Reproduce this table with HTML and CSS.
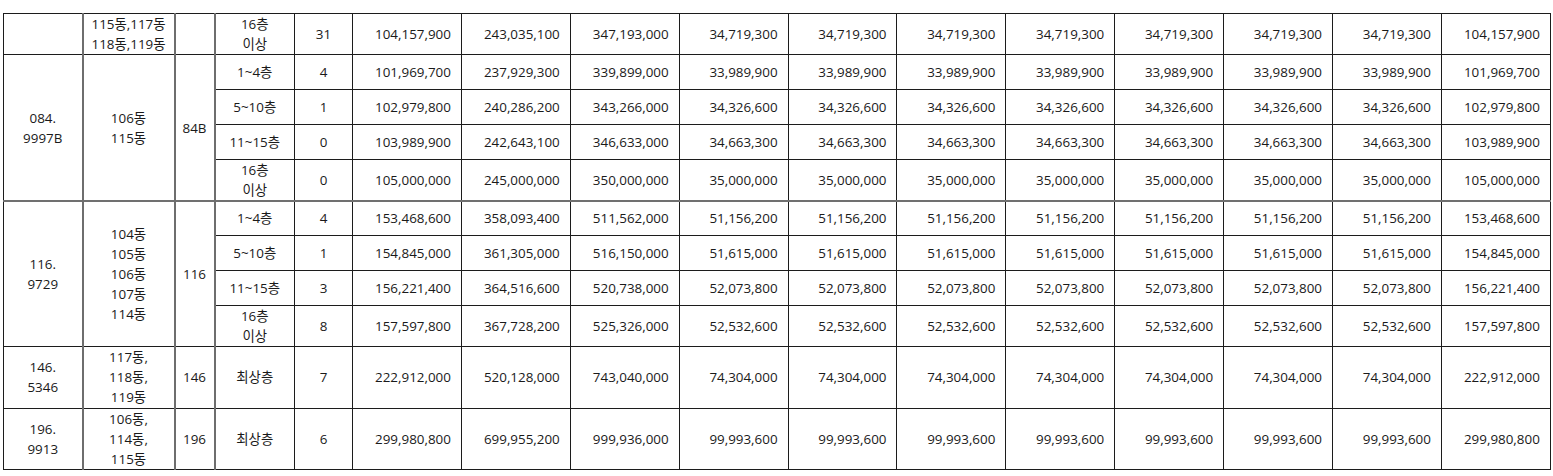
FILE: index.html
```html
<!DOCTYPE html>
<html lang="ko">
<head>
<meta charset="utf-8">
<title>분양가 표</title>
<link rel="stylesheet" href="styles.css">
</head>
<body>
<table class="price">
<colgroup>
<col class="c-type"><col class="c-dong"><col class="c-area"><col class="c-floor"><col class="c-cnt">
<col class="c-num"><col class="c-num"><col class="c-num"><col class="c-num"><col class="c-num"><col class="c-num"><col class="c-num"><col class="c-num"><col class="c-num"><col class="c-num"><col class="c-num">
</colgroup>
<tbody>
<tr class="h40">
<td class="ctr gr"></td><td class="ctr gr">115동,117동<br>118동,119동</td><td class="ctr gr"></td><td class="ctr">16층<br>이상</td><td class="ctr">31</td>
<td>104,157,900</td><td>243,035,100</td><td>347,193,000</td><td>34,719,300</td><td>34,719,300</td><td>34,719,300</td><td>34,719,300</td><td>34,719,300</td><td>34,719,300</td><td>34,719,300</td><td>104,157,900</td>
</tr>
<tr class="h35">
<td class="ctr gr" rowspan="4">084.<br>9997B</td><td class="ctr gr" rowspan="4">106동<br>115동</td><td class="ctr gr" rowspan="4">84B</td><td class="ctr">1~4층</td><td class="ctr">4</td>
<td>101,969,700</td><td>237,929,300</td><td>339,899,000</td><td>33,989,900</td><td>33,989,900</td><td>33,989,900</td><td>33,989,900</td><td>33,989,900</td><td>33,989,900</td><td>33,989,900</td><td>101,969,700</td>
</tr>
<tr class="h35">
<td class="ctr">5~10층</td><td class="ctr">1</td>
<td>102,979,800</td><td>240,286,200</td><td>343,266,000</td><td>34,326,600</td><td>34,326,600</td><td>34,326,600</td><td>34,326,600</td><td>34,326,600</td><td>34,326,600</td><td>34,326,600</td><td>102,979,800</td>
</tr>
<tr class="h35">
<td class="ctr">11~15층</td><td class="ctr">0</td>
<td>103,989,900</td><td>242,643,100</td><td>346,633,000</td><td>34,663,300</td><td>34,663,300</td><td>34,663,300</td><td>34,663,300</td><td>34,663,300</td><td>34,663,300</td><td>34,663,300</td><td>103,989,900</td>
</tr>
<tr class="h41">
<td class="ctr">16층<br>이상</td><td class="ctr">0</td>
<td>105,000,000</td><td>245,000,000</td><td>350,000,000</td><td>35,000,000</td><td>35,000,000</td><td>35,000,000</td><td>35,000,000</td><td>35,000,000</td><td>35,000,000</td><td>35,000,000</td><td>105,000,000</td>
</tr>
<tr class="h34 grp">
<td class="ctr gr" rowspan="4">116.<br>9729</td><td class="ctr gr" rowspan="4">104동<br>105동<br>106동<br>107동<br>114동</td><td class="ctr gr" rowspan="4">116</td><td class="ctr">1~4층</td><td class="ctr">4</td>
<td>153,468,600</td><td>358,093,400</td><td>511,562,000</td><td>51,156,200</td><td>51,156,200</td><td>51,156,200</td><td>51,156,200</td><td>51,156,200</td><td>51,156,200</td><td>51,156,200</td><td>153,468,600</td>
</tr>
<tr class="h35">
<td class="ctr">5~10층</td><td class="ctr">1</td>
<td>154,845,000</td><td>361,305,000</td><td>516,150,000</td><td>51,615,000</td><td>51,615,000</td><td>51,615,000</td><td>51,615,000</td><td>51,615,000</td><td>51,615,000</td><td>51,615,000</td><td>154,845,000</td>
</tr>
<tr class="h35">
<td class="ctr">11~15층</td><td class="ctr">3</td>
<td>156,221,400</td><td>364,516,600</td><td>520,738,000</td><td>52,073,800</td><td>52,073,800</td><td>52,073,800</td><td>52,073,800</td><td>52,073,800</td><td>52,073,800</td><td>52,073,800</td><td>156,221,400</td>
</tr>
<tr class="h40">
<td class="ctr">16층<br>이상</td><td class="ctr">8</td>
<td>157,597,800</td><td>367,728,200</td><td>525,326,000</td><td>52,532,600</td><td>52,532,600</td><td>52,532,600</td><td>52,532,600</td><td>52,532,600</td><td>52,532,600</td><td>52,532,600</td><td>157,597,800</td>
</tr>
<tr class="h62">
<td class="ctr gr">146.<br>5346</td><td class="ctr gr">117동,<br>118동,<br>119동</td><td class="ctr gr">146</td><td class="ctr">최상층</td><td class="ctr">7</td>
<td>222,912,000</td><td>520,128,000</td><td>743,040,000</td><td>74,304,000</td><td>74,304,000</td><td>74,304,000</td><td>74,304,000</td><td>74,304,000</td><td>74,304,000</td><td>74,304,000</td><td>222,912,000</td>
</tr>
<tr class="h60">
<td class="ctr gr">196.<br>9913</td><td class="ctr gr">106동,<br>114동,<br>115동</td><td class="ctr gr">196</td><td class="ctr">최상층</td><td class="ctr">6</td>
<td>299,980,800</td><td>699,955,200</td><td>999,936,000</td><td>99,993,600</td><td>99,993,600</td><td>99,993,600</td><td>99,993,600</td><td>99,993,600</td><td>99,993,600</td><td>99,993,600</td><td>299,980,800</td>
</tr>
</tbody>
</table>
</body>
</html>
```

FILE: styles.css
```css
html, body {
  margin: 0;
  padding: 0;
  background: #ffffff;
}
body {
  padding: 13px 0 0 3px;
  font-family: "Open Sans", "Noto Sans CJK KR", sans-serif;
  font-size: 13.4px;
  color: #1a1a1a;
}
.price {
  border-collapse: collapse;
  table-layout: fixed;
  width: 1547px;
}
.c-type { width: 79px; }
.c-dong { width: 92px; }
.c-area { width: 40px; }
.c-floor { width: 80px; }
.c-cnt { width: 58px; }
.c-num { width: 108.9px; }
.price td {
  border: 1px solid #1c1c1c;
  padding: 0 10px 0 4px;
  text-align: right;
  vertical-align: middle;
  line-height: 20px;
  white-space: nowrap;
  overflow: hidden;
}
.price td.ctr {
  text-align: center;
  padding: 0;
}
.price td.gr {
  border-right: 2px solid #6e6e6e;
}
.price tr.grp td {
  border-top: 2px solid #707070;
}
.h34 { height: 34px; }
.h35 { height: 35px; }
.h40 { height: 40px; }
.h41 { height: 41px; }
.h60 { height: 60px; }
.h62 { height: 62px; }
```
